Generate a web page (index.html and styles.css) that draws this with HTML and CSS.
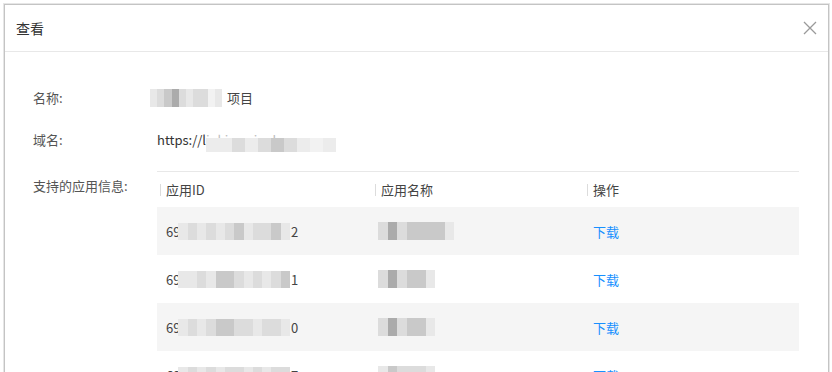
FILE: index.html
```html
<!DOCTYPE html>
<html lang="zh">
<head>
<meta charset="utf-8">
<title>查看</title>
<link rel="stylesheet" href="styles.css">
</head>
<body>
<div class="dialog">
  <div class="dialog-header">
    <span class="dialog-title">查看</span>
    <button class="close" aria-label="关闭">
      <svg width="14" height="14" viewBox="0 0 14 14"><path d="M1 1 L13 13 M13 1 L1 13" stroke="#9a9a9a" stroke-width="1.3" fill="none"/></svg>
    </button>
  </div>
  <div class="dialog-body">
    <div class="form-row">
      <div class="label">名称:</div>
      <div class="value"><span class="mz mz-name"><i class="c1"></i><i class="c2"></i><i class="c3"></i><i class="c4"></i><i class="c2"></i><i class="c1"></i><i class="c2"></i><i class="c2"></i><i class="c0"></i><i class="c1"></i></span><span class="after">项目</span></div>
    </div>
    <div class="form-row">
      <div class="label">域名:</div>
      <div class="value"><span>https://l</span><span class="faded">inking.xiaoh</span><span class="mz mz-domain"><i class="c1"></i><i class="c1"></i><i class="c2"></i><i class="c1"></i><i class="c2"></i><i class="c3"></i><i class="c2"></i><i class="c1"></i><i class="c0"></i><i class="c1"></i></span></div>
    </div>
    <div class="form-row">
      <div class="label label-top">支持的应用信息:</div>
      <div class="table">
        <div class="tr th">
          <div class="cell"><span class="sep"></span>应用ID</div>
          <div class="cell"><span class="sep"></span>应用名称</div>
          <div class="cell"><span class="sep"></span>操作</div>
        </div>
        <div class="tr odd">
          <div class="cell">69<span class="mz mz-id"><i class="c1"></i><i class="c2"></i><i class="c1"></i><i class="c2"></i><i class="c1"></i><i class="c2"></i><i class="c3"></i><i class="c1"></i><i class="c2"></i><i class="c2"></i><i class="c3"></i><i class="c1"></i></span>2</div>
          <div class="cell"><span class="mz mz-app"><i class="c2"></i><i class="c4"></i><i class="c2"></i><i class="c3"></i><i class="c3"></i><i class="c3"></i><i class="c3"></i><i class="c1"></i></span></div>
          <div class="cell"><a class="link" href="#">下载</a></div>
        </div>
        <div class="tr">
          <div class="cell">69<span class="mz mz-id"><i class="c1"></i><i class="c1"></i><i class="c2"></i><i class="c1"></i><i class="c3"></i><i class="c3"></i><i class="c2"></i><i class="c1"></i><i class="c2"></i><i class="c1"></i><i class="c2"></i><i class="c3"></i></span>1</div>
          <div class="cell"><span class="mz mz-app"><i class="c2"></i><i class="c4"></i><i class="c2"></i><i class="c3"></i><i class="c3"></i><i class="c1"></i></span></div>
          <div class="cell"><a class="link" href="#">下载</a></div>
        </div>
        <div class="tr odd">
          <div class="cell">69<span class="mz mz-id"><i class="c1"></i><i class="c2"></i><i class="c1"></i><i class="c2"></i><i class="c3"></i><i class="c3"></i><i class="c2"></i><i class="c2"></i><i class="c1"></i><i class="c2"></i><i class="c2"></i><i class="c1"></i></span>0</div>
          <div class="cell"><span class="mz mz-app"><i class="c2"></i><i class="c4"></i><i class="c2"></i><i class="c3"></i><i class="c3"></i><i class="c1"></i></span></div>
          <div class="cell"><a class="link" href="#">下载</a></div>
        </div>
        <div class="tr">
          <div class="cell">69<span class="mz mz-id"><i class="c1"></i><i class="c2"></i><i class="c1"></i><i class="c2"></i><i class="c1"></i><i class="c2"></i><i class="c2"></i><i class="c1"></i><i class="c2"></i><i class="c1"></i><i class="c2"></i><i class="c2"></i></span>7</div>
          <div class="cell"><span class="mz mz-app"><i class="c1"></i><i class="c3"></i><i class="c2"></i><i class="c2"></i><i class="c2"></i><i class="c1"></i></span></div>
          <div class="cell"><a class="link" href="#">下载</a></div>
        </div>
      </div>
    </div>
  </div>
</div>
</body>
</html>
```
FILE: styles.css
```css
* { box-sizing: border-box; }
html, body {
  margin: 0;
  padding: 0;
  background: #fff;
  height: 372px;
  overflow: hidden;
}
body {
  font-family: "Noto Sans CJK SC", "Noto Sans", sans-serif;
  font-size: 13px;
  color: #333;
}
.dialog {
  margin: 4px 3px 0 4px;
  border: 1px solid #c4c4c4;
  border-bottom: none;
  box-shadow: 0 0 0 1px #e6e6e6;
  height: 400px;
  background: #fff;
}
.dialog-header {
  height: 47px;
  border-bottom: 1px solid #e8e8e8;
  display: flex;
  align-items: center;
  justify-content: space-between;
  padding: 0 6px 0 11px;
}
.dialog-title {
  font-size: 14px;
  color: #333;
  line-height: 22px;
}
.close {
  border: none;
  background: none;
  padding: 0;
  width: 24px;
  height: 24px;
  display: flex;
  align-items: center;
  justify-content: center;
  cursor: pointer;
}
.dialog-body {
  padding: 35px 29px 0 28px;
  display: flex;
  flex-direction: column;
  gap: 20px;
}
.form-row {
  display: flex;
  align-items: flex-start;
}
.label {
  width: 124px;
  flex: none;
  line-height: 22px;
  color: #555;
}
.label-top { padding-top: 4px; }
.value {
  height: 22px;
  line-height: 22px;
  display: flex;
  align-items: center;
  color: #333;
}
.after { margin-left: 5px; color: #444; }
.faded { color: #bdbdbd; margin-right: -74px; }

/* mosaic (pixelated redaction) */
.mz {
  display: inline-flex;
  vertical-align: middle;
  height: 16px;
}
.mz i {
  display: block;
  width: 9px;
  height: 100%;
}
.mz .c0 { background: #f2f2f2; }
.mz .c1 { background: #e8e8e8; }
.mz .c2 { background: #dcdcdc; }
.mz .c3 { background: #c9c9c9; }
.mz .c4 { background: #ababab; }
.mz-name { margin-left: -7px; height: 18px; }
.mz-name i { width: 7.2px; }
.mz-domain { height: 14px; transform: translateY(5px); }
.mz-domain i { width: 13px; }
.mz-domain .c1 { background: #ececec; }
.mz-id { margin: 0 1px 0 -2px; height: 17px; }
.mz-id i { width: 9.3px; }
.mz-app { margin-left: -3px; height: 18px; }
.mz-app i { width: 9.5px; }

.table {
  width: 642px;
  border-top: 1px solid #e8e8e8;
}
.tr {
  display: grid;
  grid-template-columns: 215px 212px 1fr;
  height: 48px;
  align-items: center;
}
.tr.odd { background: #f5f5f5; }
.tr.th {
  height: 35px;
  color: #555;
}
.cell {
  padding-left: 9px;
  display: flex;
  align-items: center;
  white-space: nowrap;
  color: #444;
}
.th .cell { padding-left: 3px; }
.sep {
  width: 1px;
  height: 12px;
  background: #dcdcdc;
  margin-right: 5px;
}
.link {
  color: #1890ff;
  text-decoration: none;
}
```
